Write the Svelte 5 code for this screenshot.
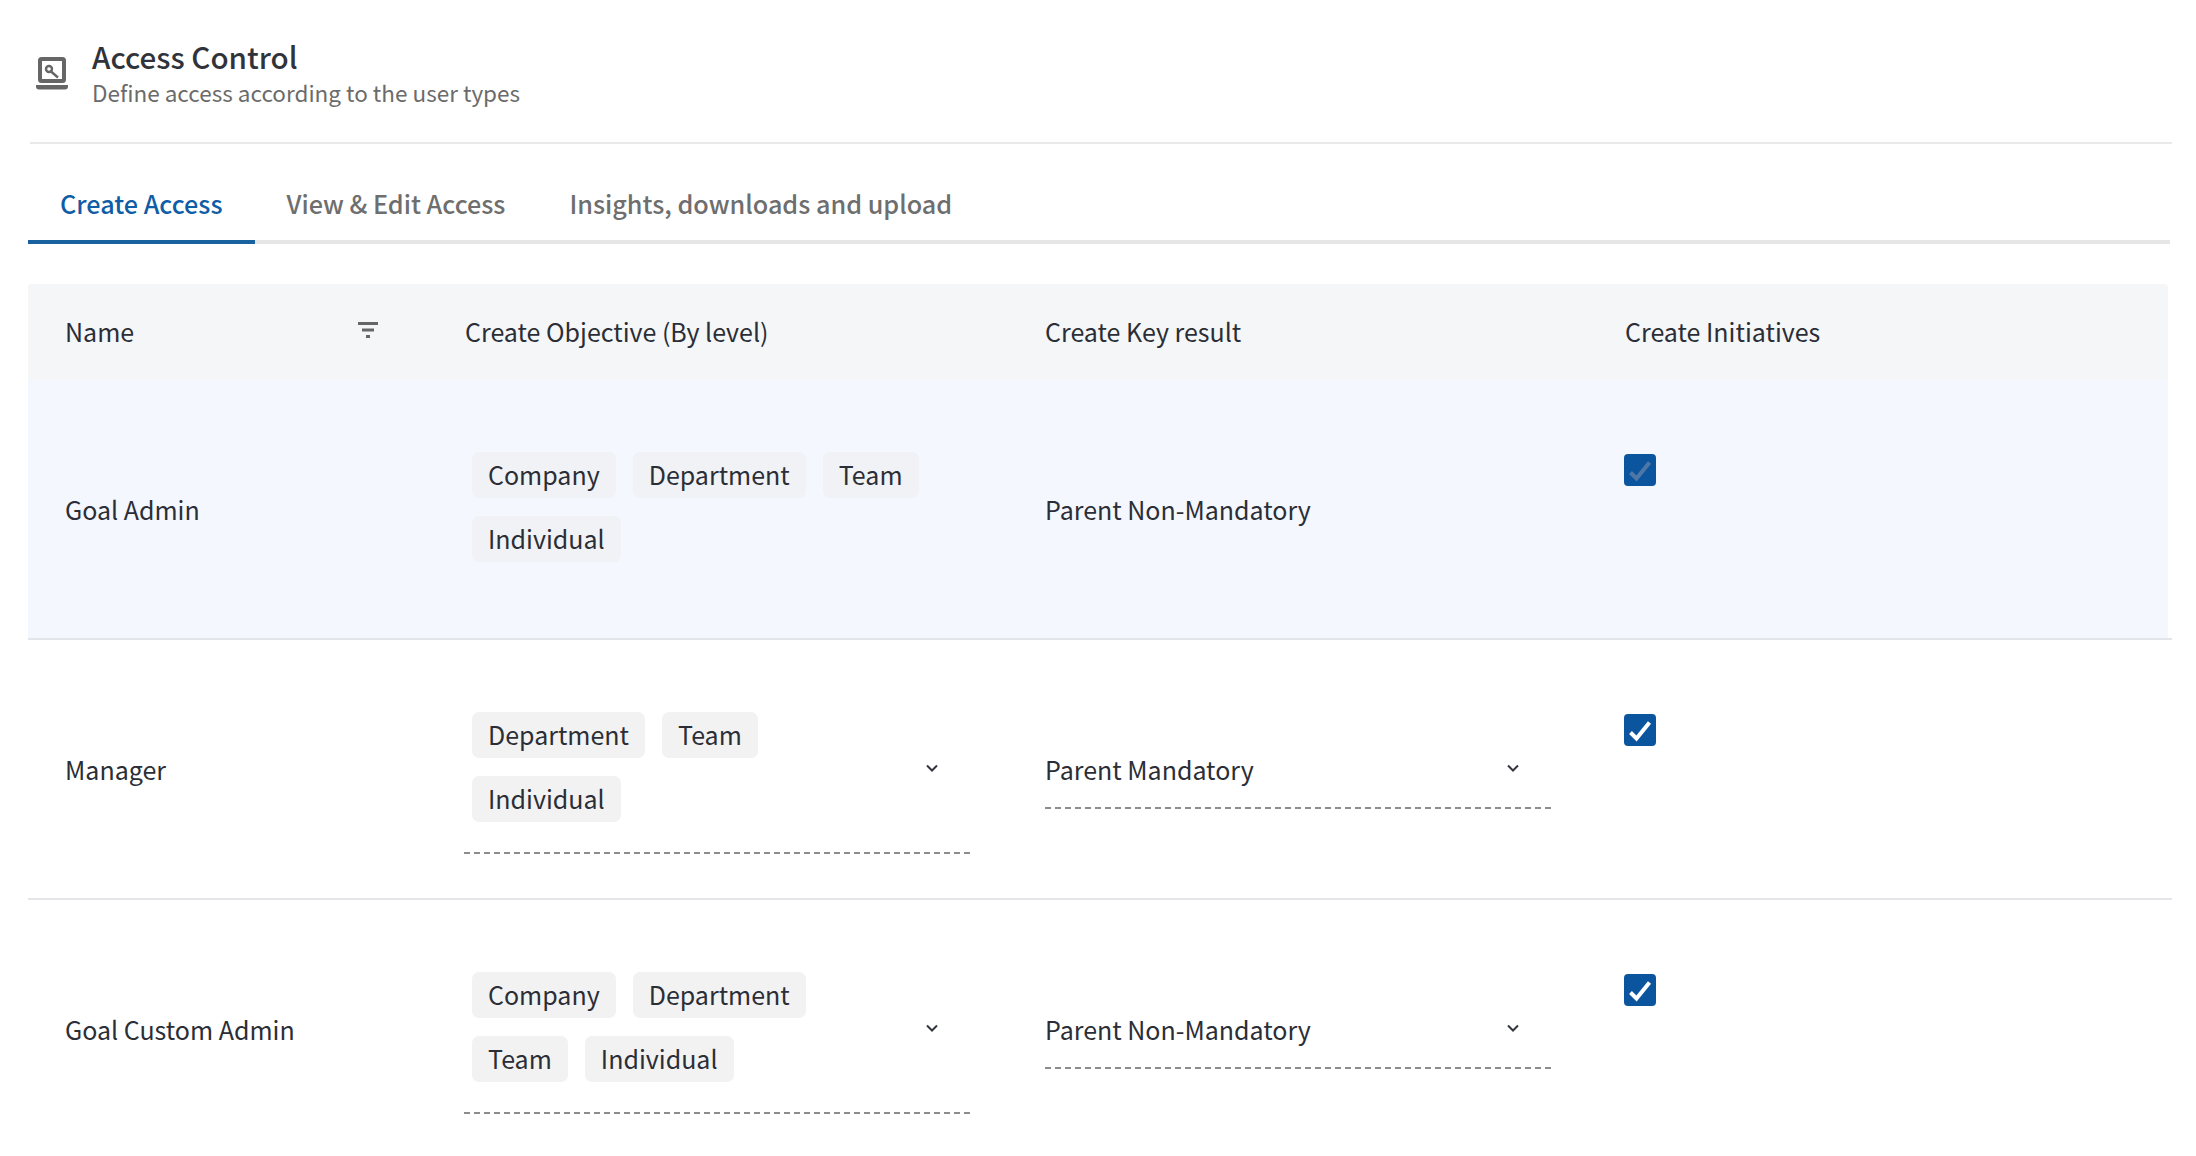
<script>
  const rows = [
    { name: 'Goal Admin', chips: ['Company', 'Department', 'Team', 'Individual'], key: 'Parent Non-Mandatory', editable: false },
    { name: 'Manager', chips: ['Department', 'Team', 'Individual'], key: 'Parent Mandatory', editable: true },
    { name: 'Goal Custom Admin', chips: ['Company', 'Department', 'Team', 'Individual'], key: 'Parent Non-Mandatory', editable: true }
  ];
  const tabs = ['Create Access', 'View & Edit Access', 'Insights, downloads and upload'];
</script>

{#snippet chevron()}
  <svg class="chev" width="12" height="8" viewBox="0 0 12 8" aria-hidden="true"><path d="M1 1.5 6 6.5 11 1.5" fill="none" stroke="#33363c" stroke-width="2"/></svg>
{/snippet}

<main class="page">
  <header class="head">
    <svg class="laptop" width="32" height="33" viewBox="0 0 32 33" aria-hidden="true">
      <rect x="4" y="2" width="24" height="22" rx="1.5" fill="#fff" stroke="#666" stroke-width="4"/>
      <circle cx="13" cy="12" r="3" fill="none" stroke="#666" stroke-width="2.4"/>
      <path d="M15 14.5 22 20.5" stroke="#666" stroke-width="2.4"/>
      <path d="M0 28h32v1.5a3 3 0 0 1-3 3H3a3 3 0 0 1-3-3z" fill="#666"/>
    </svg>
    <div class="titles">
      <h1>Access Control</h1>
      <p>Define access according to the user types</p>
    </div>
  </header>

  <nav class="tabs">
    {#each tabs as t, i}
      <div class="tab" class:active={i === 0}>{t}</div>
    {/each}
  </nav>

  <section class="table">
    <div class="row top">
      <div class="cell first">Name
        <svg class="filter" width="20" height="16" viewBox="0 0 20 16" aria-hidden="true"><path d="M0 0h20v3H0zM4 6.500h12v3H4zM8 13h4v3H8z" fill="#666"/></svg>
      </div>
      <div class="cell">Create Objective (By level)</div>
      <div class="cell">Create Key result</div>
      <div class="cell">Create Initiatives</div>
    </div>

    {#each rows as r, i}
      <div class="row body" class:hl={!r.editable}>
        <div class="cell first label">{r.name}</div>
        <div class="cell">
          <div class="select" class:dash={r.editable}>
            <div class="chips" class:narrow={r.editable}>
              {#each r.chips as c}<span class="chip">{c}</span>{/each}
            </div>
            {#if r.editable}{@render chevron()}{/if}
          </div>
        </div>
        <div class="cell">
          <div class="keysel" class:dash={r.editable}>
            <span class="label">{r.key}</span>
            {#if r.editable}{@render chevron()}{/if}
          </div>
        </div>
        <div class="cell checkcell">
          <svg class="check" width="32" height="32" viewBox="0 0 32 32" aria-hidden="true">
            <rect width="32" height="32" rx="4" fill="#0b559f"/>
            <path d="M6.500 18.500 12.500 24.500 25.500 8.500" fill="none" stroke={r.editable ? '#fff' : '#4f77a6'} stroke-width="4"/>
          </svg>
        </div>
      </div>
    {/each}
  </section>
</main>

<style>
  :global(body) { margin: 0; background: #fff; overflow: hidden; }
  .page {
    width: 2196px; height: 1156px; overflow: hidden; box-sizing: border-box;
    padding: 0 24px 0 28px;
    font-family: "Noto Sans CJK JP", "Noto Sans", sans-serif;
    font-size: 25px; color: #2b2e36;
  }
  .head {
    height: 144px; box-sizing: border-box; padding: 37px 0 0 8px;
    display: flex; align-items: flex-start; gap: 24px;
    border-bottom: 2px solid #e9e9e9; margin-left: 2px;
  }
  .laptop { margin-top: 20px; margin-left: -2px; }
  .titles { padding-top: 1px; }
  h1 { margin: 0; font-size: 29.600px; font-weight: 500; line-height: 38px; color: #30333a; }
  .titles p { margin: 0; font-size: 22.500px; line-height: 33px; color: #6b6b6b; }
  .tabs {
    display: flex; height: 100px; box-sizing: border-box; margin-right: 2px;
    border-bottom: 4px solid #e6e6e6;
  }
  .tab {
    padding: 0 32px; height: 100px; box-sizing: border-box; line-height: 119px;
    font-size: 25.200px; font-weight: 500; color: #6e6e6e; white-space: nowrap;
    border-bottom: 4px solid transparent;
  }
  .tab.active { color: #0f5da6; border-bottom-color: #1a629f; }
  .table { margin-top: 40px; }
  .row {
    display: grid; grid-template-columns: 437px 580px 580px 1fr;
  }
  .top {
    height: 96px; box-sizing: border-box; padding-bottom: 3px; background: #f5f6f8; margin-right: 4px; align-items: center;
    border-radius: 4px 4px 0 0;
  }
  .body {
    height: 260px; box-sizing: border-box; border-bottom: 2px solid #e3e5e8; align-items: center;
  }
  .hl { background: linear-gradient(#f4f7fe, #f4f7fe) no-repeat left top / 2140px 100%; }
  .first { padding-left: 37px; position: relative; }
  .label { line-height: 34px; padding-bottom: 1px; }
  .filter { position: absolute; left: 330px; top: 50%; margin-top: -9px; }
  .select {
    width: 509px; height: 169px; box-sizing: border-box; padding: 27px 0 0 8px;
    position: relative; margin-left: -1px;
  }
  .chips { display: flex; flex-wrap: wrap; gap: 18px 17px; }
  .chips.narrow { width: 430px; }
  .chip {
    height: 46px; line-height: 45px; padding: 0 16px; background: #f2f2f3;
    border-radius: 7px; white-space: nowrap;
  }
  .hl .chip { background: #f0f2f5; }
  .select .chev { position: absolute; right: 35px; top: 79px; }
  .keysel {
    width: 508px; height: 79px; position: relative; display: flex; align-items: center;
  }
  .keysel .chev { position: absolute; right: 34px; top: 34px; }
  .dash {
    background: repeating-linear-gradient(90deg, #8c8c8c 0 6px, transparent 6px 10px) no-repeat left bottom / 100% 2px;
  }
  .checkcell { align-self: start; padding-top: 74px; }
  .check { display: block; margin-left: -1px; }
</style>
